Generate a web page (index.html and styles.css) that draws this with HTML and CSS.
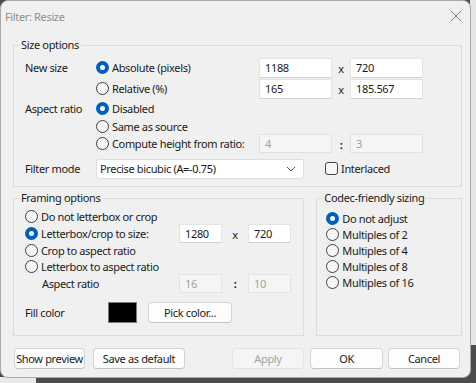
FILE: index.html
```html
<!DOCTYPE html>
<html lang="en">
<head>
    <meta charset="UTF-8">
    <title>Filter: Resize</title>
    <link rel="stylesheet" href="styles.css">
</head>
<body>
    <div class="window">
        <div class="titlebar">
            <span class="title">Filter: Resize</span>
            <svg class="close" width="12" height="12" viewBox="0 0 12 12"><path d="M1 1L11 11M11 1L1 11" stroke="#7a7a7a" stroke-width="1"/></svg>
        </div>
        <div class="content">
            <fieldset class="group size-group">
                <legend>Size options</legend>
                <div class="size-grid">
                    <span class="label">New size</span>
                    <span class="radio checked">Absolute (pixels)</span>
                    <div class="field">1188</div>
                    <span class="sep">x</span>
                    <div class="field">720</div>

                    <span class="label"></span>
                    <span class="radio">Relative (%)</span>
                    <div class="field">165</div>
                    <span class="sep">x</span>
                    <div class="field">185.567</div>

                    <span class="label">Aspect ratio</span>
                    <span class="radio checked wide">Disabled</span>

                    <span class="label"></span>
                    <span class="radio wide">Same as source</span>

                    <span class="label"></span>
                    <span class="radio">Compute height from ratio:</span>
                    <div class="field disabled">4</div>
                    <span class="sep colon">:</span>
                    <div class="field disabled">3</div>
                </div>
                <div class="filter-row">
                    <span class="label">Filter mode</span>
                    <div class="select">
                        <span>Precise bicubic (A=-0.75)</span>
                        <svg width="10" height="6" viewBox="0 0 10 6"><path d="M1 1L5 5L9 1" fill="none" stroke="#555" stroke-width="1"/></svg>
                    </div>
                    <span class="checkbox">Interlaced</span>
                </div>
            </fieldset>

            <div class="lower">
                <fieldset class="group framing">
                    <legend>Framing options</legend>
                    <div class="framing-grid">
                        <span class="radio row-full">Do not letterbox or crop</span>

                        <span class="radio checked">Letterbox/crop to size:</span>
                        <div class="field">1280</div>
                        <span class="sep">x</span>
                        <div class="field">720</div>

                        <span class="radio row-full">Crop to aspect ratio</span>
                        <span class="radio row-full">Letterbox to aspect ratio</span>

                        <span class="indent">Aspect ratio</span>
                        <div class="field disabled">16</div>
                        <span class="sep colon">:</span>
                        <div class="field disabled">10</div>
                    </div>
                    <div class="fill-row">
                        <span class="fill-label">Fill color</span>
                        <span class="swatch"></span>
                        <button class="btn pick">Pick color...</button>
                    </div>
                </fieldset>

                <fieldset class="group codec">
                    <legend>Codec-friendly sizing</legend>
                    <div class="codec-list">
                        <span class="radio checked">Do not adjust</span>
                        <span class="radio">Multiples of 2</span>
                        <span class="radio">Multiples of 4</span>
                        <span class="radio">Multiples of 8</span>
                        <span class="radio">Multiples of 16</span>
                    </div>
                </fieldset>
            </div>

            <div class="buttons">
                <button class="btn preview">Show preview</button>
                <button class="btn save">Save as default</button>
                <button class="btn apply" disabled>Apply</button>
                <button class="btn ok">OK</button>
                <button class="btn cancel">Cancel</button>
            </div>
        </div>
    </div>
</body>
</html>
```

FILE: styles.css
```css
body {
    margin: 0;
    padding: 0;
    width: 476px;
    height: 383px;
    overflow: hidden;
    font-family: "Noto Sans", sans-serif;
    font-size: 11px;
    letter-spacing: -0.35px;
    color: #1a1a1a;
    background:
        linear-gradient(#e6e6e6, #e6e6e6) right top / 6px 345px no-repeat,
        linear-gradient(#e9e9e9, #e9e9e9) left bottom / 36px 6px no-repeat,
        #4c4c4c;
}
.window {
    box-sizing: border-box;
    width: 471px;
    height: 378px;
    background: #f0f0f0;
    border: 1px solid #a9a9a9;
    border-radius: 8px;
}
.titlebar {
    height: 29px;
    display: flex;
    align-items: center;
    justify-content: space-between;
    padding: 0 8px 0 4px;
}
.title {
    color: #8f8f8f;
    margin-top: 1px;
}
.content {
    padding: 7px 8px 0 12px;
}

/* group boxes */
.group {
    margin: 0;
    padding: 0;
    border: 1px solid #dcdcdc;
    min-width: 0;
}
.group legend {
    margin-left: 5px;
    padding: 0 2px;
    line-height: 16px;
}

.size-group {
    padding: 4px 0 6px 0;
}
.size-grid {
    display: grid;
    grid-template-columns: 71px 163px 73px 18px 73px;
    grid-template-rows: 21px 21px 19px 17px 17px;
    align-items: center;
    margin-left: 11px;
}
.size-grid .wide {
    grid-column: 2 / 6;
}
.sep {
    text-align: center;
    padding-top: 1px;
}
.colon {
    font-weight: bold;
}
.field {
    box-sizing: border-box;
    height: 20px;
    background: #fff;
    border: 1px solid #e4e4e4;
    border-bottom-color: #d2d2d2;
    padding: 0 5px;
    line-height: 18px;
}
.field.disabled {
    height: 19px;
    background: #f5f5f5;
    border-color: #e2e2e2;
    color: #a0a0a0;
    line-height: 17px;
}

.filter-row {
    display: flex;
    align-items: center;
    height: 23px;
    margin: 5px 0 0 11px;
}
.filter-row .label {
    width: 71px;
}
.select {
    box-sizing: border-box;
    width: 208px;
    height: 20px;
    background: #fff;
    border: 1px solid #dedede;
    border-radius: 3px;
    display: flex;
    align-items: center;
    justify-content: space-between;
    padding: 0 7px 0 3px;
}
.checkbox {
    display: flex;
    align-items: center;
    margin-left: 21px;
}
.checkbox::before {
    content: "";
    box-sizing: border-box;
    width: 13px;
    height: 13px;
    border: 1px solid #444;
    border-radius: 3px;
    background: #f7f7f7;
    margin-right: 3px;
}

/* radios */
.radio {
    display: flex;
    align-items: center;
    white-space: nowrap;
}
.radio::before {
    content: "";
    box-sizing: border-box;
    flex: none;
    width: 13px;
    height: 13px;
    border: 1px solid #3f3f3f;
    border-radius: 50%;
    background: #f6f6f6;
    margin-right: 3px;
}
.radio.checked::before {
    border: 4px solid #005fb8;
    background: #fff;
}

.lower {
    display: flex;
    gap: 12px;
    margin-top: 3px;
}
.framing {
    width: 292px;
    height: 146px;
    box-sizing: border-box;
    padding: 2px 0 0 0;
}
.framing-grid {
    display: grid;
    grid-template-columns: 154px 43px 26px 43px;
    grid-template-rows: 17px 17px 16px 16px 18px;
    align-items: center;
    margin-left: 11px;
}
.row-full {
    grid-column: 1 / 5;
}
.indent {
    padding-left: 17px;
}
.framing-grid .field {
    height: 19px;
    line-height: 17px;
}
.fill-row {
    display: flex;
    align-items: center;
    margin: 10px 0 0 11px;
    height: 21px;
}
.fill-label {
    width: 83px;
}
.swatch {
    box-sizing: border-box;
    width: 29px;
    height: 21px;
    background: #000;
    border: 1px solid #7a7a7a;
    margin-right: 11px;
}

.codec {
    width: 146px;
    height: 146px;
    box-sizing: border-box;
    padding: 4px 0 0 0;
}
.codec-list {
    display: grid;
    grid-template-rows: repeat(5, 16px);
    align-items: center;
    margin-left: 9px;
}

/* buttons */
.btn {
    box-sizing: border-box;
    height: 21px;
    font-family: "Noto Sans", sans-serif;
    font-size: 11px;
    letter-spacing: -0.35px;
    color: #1a1a1a;
    background: #fdfdfd;
    border: 1px solid #d3d3d3;
    border-bottom-color: #c2c2c2;
    border-radius: 4px;
    padding: 0;
    white-space: nowrap;
}
.pick {
    width: 84px;
}
.buttons {
    display: flex;
    margin: 12px 2px 0 1px;
}
.preview {
    width: 71px;
    margin-right: 8px;
}
.save {
    width: 92px;
}
.apply {
    width: 72px;
    margin-left: auto;
    background: #f5f5f5;
    color: #a3a3a3;
    border-color: #e3e3e3;
}
.ok {
    width: 73px;
    margin-left: 6px;
}
.cancel {
    width: 72px;
    margin-left: 5px;
}
```
